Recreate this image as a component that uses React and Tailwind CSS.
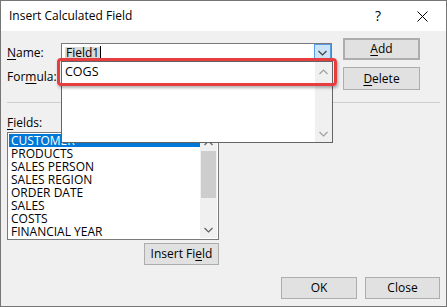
import React from 'react';

const fields = ['CUSTOMER', 'PRODUCTS', 'SALES PERSON', 'SALES REGION', 'ORDER DATE', 'SALES', 'COSTS', 'FINANCIAL YEAR'];

function Chevron({ up = false, color = '#a0a0a0' }) {
  return (
    <svg width="9" height="6" viewBox="0 0 9 6" className="block">
      <path d={up ? 'M0.5 5 L4.5 1 L8.5 5' : 'M0.5 1 L4.5 5 L8.5 1'} fill="none" stroke={color} strokeWidth="1.2" />
    </svg>
  );
}

function Btn({ children, className = '' }) {
  return (
    <div className={`flex items-center justify-center bg-[#e1e1e1] border border-[#adadad] text-[12px] text-black ${className}`}>
      {children}
    </div>
  );
}

export default function App() {
  return (
    <div className="w-[447px] h-[307px] flex flex-col border border-[#767676] bg-[#f0f0f0] font-['Segoe_UI','Open_Sans',sans-serif] text-[12px] text-black leading-none overflow-hidden">
      {/* title bar */}
      <div className="h-[30px] shrink-0 bg-white flex items-center">
        <span className="ml-[8px] text-[12px]">Insert Calculated Field</span>
        <span className="ml-auto mr-[36px] text-[14px]">?</span>
        <svg width="11" height="11" viewBox="0 0 11 11" className="mr-[18px]">
          <path d="M0.5 0.5 L10.5 10.5 M10.5 0.5 L0.5 10.5" stroke="#000" strokeWidth="1" />
        </svg>
      </div>

      {/* body */}
      <div className="relative flex-1 px-[6px] pt-[7px]">
        <div className="flex items-start">
          <div className="w-[336px]">
            <div className="flex items-center h-[19px] mt-[5px]">
              <span className="w-[54px]"><span className="underline underline-offset-2">N</span>ame:</span>
              <div className="w-[271px] h-[19px] border border-[#7a7a7a] bg-white flex items-center">
                <span className="ml-[3px] bg-[#d9d9d9] px-px">Field1</span>
                <span className="w-px h-[13px] bg-black"></span>
                <div className="ml-auto w-[17px] h-[17px] bg-[#cce4f7] border border-[#569de5] flex items-center justify-center">
                  <Chevron color="#404040" />
                </div>
              </div>
            </div>
            <div className="flex items-center h-[19px] mt-[5px]">
              <span className="w-[54px]">For<span className="underline underline-offset-2">m</span>ula:</span>
              <div className="w-[271px] h-[19px] border border-[#7a7a7a] bg-white"></div>
            </div>
          </div>
          <div className="flex flex-col">
            <Btn className="w-[77px] h-[22px] border-2 border-[#0078d7]"><span className="underline underline-offset-2">A</span>dd</Btn>
            <Btn className="w-[77px] h-[23px] mt-[7px]"><span className="underline underline-offset-2">D</span>elete</Btn>
          </div>
        </div>

        <div className="mt-[12px] w-[433px] h-px bg-[#cfcfcf]"></div>

        <div className="mt-[14px] h-[14px]"><span className="underline underline-offset-2">F</span>ields:</div>

        <div className="mt-[1px] w-[212px] h-[108px] border border-[#7a7a7a] bg-white p-px flex">
          <div className="flex-1 flex flex-col">
            {fields.map((f, i) => (
              <div key={f} className={`h-[13px] leading-[13px] pl-[2px] ${i === 0 ? 'bg-[#0078d7] text-white' : ''}`}>{f}</div>
            ))}
          </div>
          <div className="w-[17px] bg-[#f0f0f0] flex flex-col">
            <div className="h-[17px] flex items-center justify-center"><Chevron up color="#606060" /></div>
            <div className="mx-[1px] h-[47px] bg-[#cdcdcd]"></div>
            <div className="mt-auto h-[17px] flex items-center justify-center"><Chevron color="#606060" /></div>
          </div>
        </div>

        <div className="w-[212px] flex justify-end mt-[3px]">
          <Btn className="w-[75px] h-[22px]">Insert Fi<span className="underline underline-offset-2">e</span>ld</Btn>
        </div>

        <div className="flex justify-end gap-[8px] mt-[12px]">
          <Btn className="w-[76px] h-[22px]">OK</Btn>
          <Btn className="w-[75px] h-[22px]">Close</Btn>
        </div>

        {/* dropdown list */}
        <div className="absolute left-[60px] top-[30px] w-[272px] h-[82px] border border-[#646464] bg-white flex">
          <div className="flex-1">
            <div className="h-[20px] flex items-center pl-[3px] text-[12.5px]">COGS</div>
          </div>
          <div className="w-[17px] bg-[#f0f0f0] flex flex-col">
            <div className="h-[20px] flex items-center justify-center"><Chevron up /></div>
            <div className="mt-auto h-[17px] flex items-center justify-center"><Chevron /></div>
          </div>
        </div>

        {/* highlight */}
        <div className="absolute left-[56px] top-[27px] w-[280px] h-[28px] border-[3px] border-[#e63e40] rounded-[4px] shadow-[1px_2px_3px_rgba(0,0,0,0.3)]"></div>
      </div>
    </div>
  );
}
